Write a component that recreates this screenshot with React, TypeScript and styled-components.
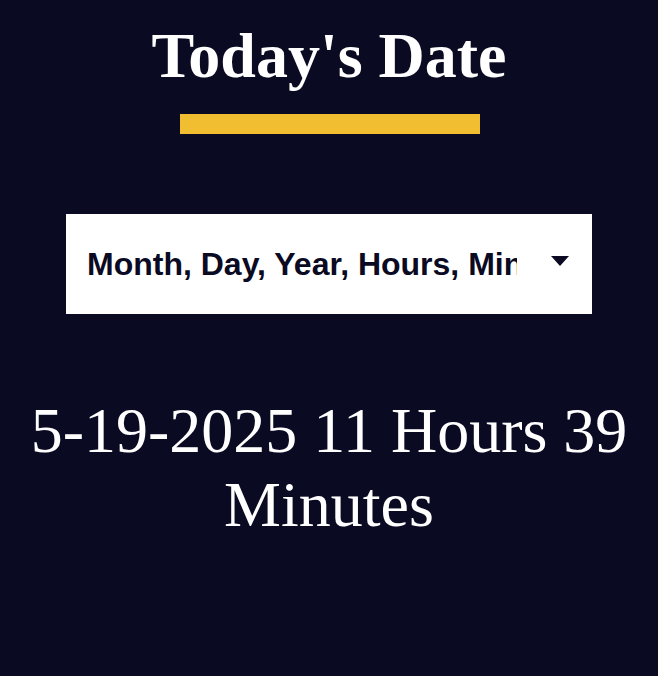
import React from "react";
import styled, { createGlobalStyle } from "styled-components";

const GlobalStyle = createGlobalStyle`
  html, body {
    margin: 0;
    padding: 0;
    background-color: #0a0a23;
  }
  body {
    font-family: "Liberation Serif", "Times New Roman", serif;
    color: #ffffff;
  }
`;

const Page = styled.main`
  min-height: 676px;
  padding-top: 19px;
  box-sizing: border-box;
  display: flex;
  flex-direction: column;
  align-items: center;
  text-align: center;
  background-color: #0a0a23;
`;

const Title = styled.h1`
  margin: 0;
  font-family: "Liberation Serif", "Times New Roman", serif;
  font-weight: 700;
  font-size: 64px;
  line-height: normal;
  color: #ffffff;
`;

const Divider = styled.hr`
  width: 300px;
  height: 20px;
  margin: 21px 0 0 1px;
  border: none;
  background-color: #f1be32;
`;

const Select = styled.div`
  margin-top: 80px;
  width: 526px;
  height: 100px;
  box-sizing: border-box;
  padding: 0 23px 0 21px;
  background-color: #ffffff;
  display: flex;
  align-items: center;
  gap: 34px;
`;

const SelectValue = styled.span`
  flex: 1;
  min-width: 0;
  overflow: hidden;
  white-space: nowrap;
  text-align: left;
  font-family: "Liberation Sans", Arial, sans-serif;
  font-weight: 700;
  font-size: 32px;
  color: #0a0a23;
`;

const Caret = styled.svg`
  width: 18px;
  height: 10px;
  flex: none;
  margin-bottom: 6px;
`;

const DateText = styled.p`
  margin: 80px 0 0;
  font-family: "Liberation Serif", "Times New Roman", serif;
  font-size: 64px;
  line-height: normal;
  color: #ffffff;
`;

export default function App() {
  return (
    <>
      <GlobalStyle />
      <Page>
        <Title>Today's Date</Title>
        <Divider />
        <Select role="combobox" aria-label="Date format">
          <SelectValue>Month, Day, Year, Hours, Minutes</SelectValue>
          <Caret viewBox="0 0 18 10" aria-hidden="true">
            <polygon points="0,0 18,0 9,10" fill="#0a0a23" />
          </Caret>
        </Select>
        <DateText>
          5-19-2025 11 Hours 39
          <br />
          Minutes
        </DateText>
      </Page>
    </>
  );
}
